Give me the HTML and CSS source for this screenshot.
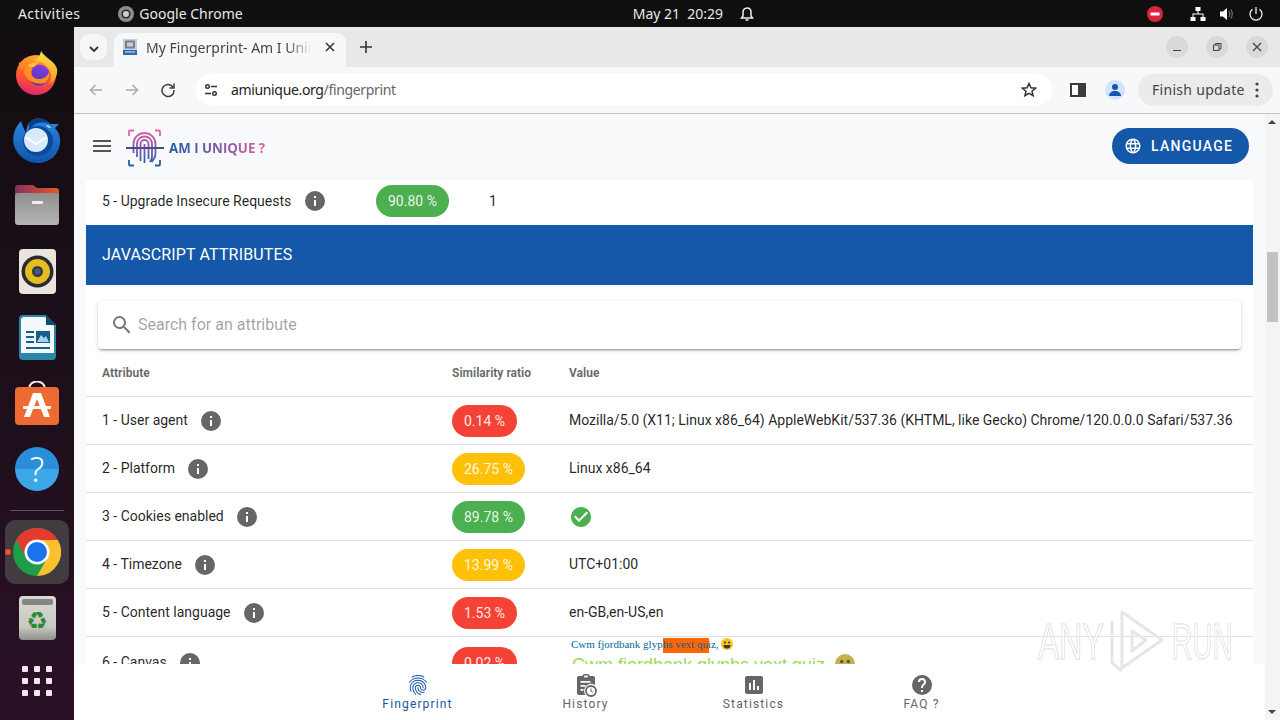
FILE: index.html
```html
<!DOCTYPE html>
<html lang="en">
<head>
  <meta charset="UTF-8">
  <title>My Fingerprint- Am I Unique?</title>
  <link rel="stylesheet" href="styles.css">
</head>
<body>
  <svg class="defs" width="0" height="0">
    <symbol id="i-info" viewBox="0 0 24 24"><path d="M13,9H11V7H13M13,17H11V11H13M12,2A10,10 0 0,0 2,12A10,10 0 0,0 12,22A10,10 0 0,0 22,12A10,10 0 0,0 12,2Z"/></symbol>
  </svg>

  <div class="topbar">
    <span class="activities">Activities</span>
    <span class="app-name">
      <svg width="16" height="16" viewBox="0 0 16 16"><circle cx="8" cy="8" r="8" fill="#8d8d8d"/><circle cx="8" cy="8" r="4.6" fill="#2c2c2c"/><circle cx="8" cy="8" r="3" fill="#cfcfcf"/></svg>
      Google Chrome
    </span>
    <span class="clock">May 21&nbsp; 20:29</span>
    <svg class="bell" width="16" height="16" viewBox="0 0 16 16" fill="none" stroke="#eee" stroke-width="1.5"><path d="M8 2c-2.6 0-4 2-4 4.2V10l-1.5 2h11L12 10V6.200C12 4 10.600 2 8 2z"/><path d="M6.500 14h3" /></svg>
    <span class="tray">
      <svg class="tray-stop" width="16" height="16" viewBox="0 0 16 16"><circle cx="8" cy="8" r="8" fill="#d9243d"/><rect x="3.500" y="6.500" width="9" height="3" fill="#fff"/></svg>
      <svg class="tray-net" width="16" height="16" viewBox="0 0 16 16" fill="#fff"><rect x="5.500" y="1" width="5" height="4"/><rect x="0.500" y="11" width="5" height="4"/><rect x="10.500" y="11" width="5" height="4"/><path d="M7.500 5h1v2.500h5V11h-1V8.500h-9V11h-1V7.500h5z"/></svg>
      <svg class="tray-vol" width="16" height="16" viewBox="0 0 16 16"><path d="M1 5.500h3L8 2v12l-4-3.500H1z" fill="#fff"/><path d="M10 5c1 1.800 1 4.200 0 6M12 3.500c1.600 2.700 1.600 6.300 0 9" fill="none" stroke="#888" stroke-width="1"/></svg>
      <svg class="tray-pow" width="16" height="16" viewBox="0 0 16 16" fill="none" stroke="#eee" stroke-width="1.300"><path d="M8 1v7"/><path d="M4.500 3.200a6 6 0 1 0 7 0"/></svg>
    </span>
  </div>

  <nav class="dock">
    <div class="dock-slot">
      <svg width="44" height="44" viewBox="0 0 44 44">
        <defs>
          <linearGradient id="ff" x1="0.6" y1="0" x2="0.4" y2="1"><stop offset="0" stop-color="#ffb12a"/><stop offset=".55" stop-color="#ff5a2c"/><stop offset="1" stop-color="#e0246e"/></linearGradient>
          <linearGradient id="ffy" x1="0" y1="0" x2="0" y2="1"><stop offset="0" stop-color="#ffe04a"/><stop offset="1" stop-color="#ff9a20"/></linearGradient>
          <linearGradient id="ffp" x1="0.7" y1="0" x2="0.3" y2="1"><stop offset="0" stop-color="#8a3fe0"/><stop offset="1" stop-color="#4b2fb8"/></linearGradient>
        </defs>
        <circle cx="21" cy="24" r="20" fill="url(#ff)"/>
        <path d="M4 11c0 3 1 5 3 7l5-4z" fill="#ff8a26"/>
        <path d="M26 0c-1 5-3 8-7 10 6 0 12 3 15 8 3 5 3 11 0 15 6-3 9-9 8-15-1-7-12-11-16-18z" fill="url(#ffy)"/>
        <circle cx="24" cy="24" r="10.500" fill="url(#ffp)"/>
        <path d="M9 21c1-7 8-11 15-10 2 0 4 1 6 2-5-1-9 0-12 3l-1 3c-2 4 1 9 7 9 5 0 9-3 10-7 1 3 0 8-4 11-7 2-18 0-21-11z" fill="#ff8d24"/>
        <path d="M13 14c3-2 7-3 11-3l-5 5h-5z" fill="#ffc238"/>
      </svg>
    </div>
    <div class="dock-slot">
      <svg width="50" height="48" viewBox="0 0 50 48">
        <defs><linearGradient id="tb" x1="0.5" y1="0" x2="0.5" y2="1"><stop offset="0" stop-color="#2a86e0"/><stop offset="1" stop-color="#0f55ad"/></linearGradient></defs>
        <path d="M9 6C2 13-1 24 3 33c4 9 13 15 23 15 12 0 21-9 22-20 .5-6-1-11-5-15l4-4-9 0C32 2 22 2 17 8c-2 3-3 7-3 10C12 14 10 10 9 6z" fill="url(#tb)"/>
        <path d="M17 8c5-6 15-6 21 1-5-2-11-2-15 0-3 2-5 5-6 8z" fill="#0b3d85"/>
        <circle cx="26" cy="26" r="15" fill="#0d4a9e"/>
        <circle cx="24" cy="25" r="12" fill="#d6eaf8"/>
        <path d="M13.500 22L24 29l10.500-7" fill="none" stroke="#fff" stroke-width="2"/>
        <path d="M34 10c2 0 4 1 5 3-2 0-4-1-5-3z" fill="#cfe6fa"/>
      </svg>
    </div>
    <div class="dock-slot">
      <svg width="44" height="40" viewBox="0 0 44 40"><defs><linearGradient id="fold" x1="0" y1="0" x2="1" y2="0"><stop offset="0" stop-color="#8a2f5a"/><stop offset="1" stop-color="#e0582c"/></linearGradient><linearGradient id="foldb" x1="0" y1="0" x2="0" y2="1"><stop offset="0" stop-color="#8f8f8f"/><stop offset="1" stop-color="#b5b5b5"/></linearGradient></defs><path d="M3 0h15l4 3h19a3 3 0 0 1 3 3v6H0V3a3 3 0 0 1 3-3z" fill="url(#fold)"/><rect y="8" width="44" height="32" rx="3" fill="url(#foldb)"/><rect x="17" y="16" width="11" height="3" rx="1" fill="#eee"/></svg>
    </div>
    <div class="dock-slot">
      <svg width="37" height="45" viewBox="0 0 37 45"><rect width="37" height="45" rx="4" fill="#e8e5dc"/><circle cx="18.500" cy="22.500" r="16" fill="#2a2a35"/><circle cx="18.500" cy="22.500" r="12.500" fill="#e6bd1e"/><circle cx="18.500" cy="22.500" r="5.500" fill="#333a48"/><circle cx="18.500" cy="22.500" r="3" fill="#4d5a6e"/></svg>
    </div>
    <div class="dock-slot">
      <svg width="37" height="45" viewBox="0 0 37 45"><path d="M4 0h23l10 10v31a4 4 0 0 1-4 4H4a4 4 0 0 1-4-4V4a4 4 0 0 1 4-4z" fill="#2a86a8"/><path d="M4 2h22l9 9v27H2V4z" fill="#f3f8fb"/><path d="M27 0l10 10H27z" fill="#0f4d75"/><rect x="7" y="16" width="8" height="2" fill="#1a5e8e"/><rect x="7" y="21" width="8" height="2" fill="#1a5e8e"/><rect x="7" y="26" width="8" height="2" fill="#1a5e8e"/><rect x="7" y="32" width="24" height="2" fill="#1a5e8e"/><rect x="17" y="16" width="14" height="12" fill="#1a5e8e"/><path d="M18 27l4-7 3 3 2-2 3 6z" fill="#a9d3ec"/></svg>
    </div>
    <div class="dock-slot">
      <svg width="44" height="44" viewBox="0 0 44 44"><path d="M14 8C14-2 30-2 30 8" fill="none" stroke="#f2e8e2" stroke-width="2"/><rect y="6" width="44" height="38" rx="4" fill="#ee6a33"/><path d="M18 12h8l9 24h-6l-7-18-7 18H9z" fill="#fff"/><rect x="8" y="25" width="28" height="3" rx="1" fill="#fff"/></svg>
    </div>
    <div class="dock-slot">
      <div class="help-ball">?</div>
    </div>
    <div class="dock-sep"></div>
    <div class="dock-slot dock-active">
      <span class="run-dot"></span>
      <svg width="48" height="48" viewBox="0 0 48 48"><circle cx="24" cy="24" r="24" fill="#1f9e4a"/><path d="M24 0A24 24 0 0 1 44.800 12H24A12 12 0 0 0 13.600 30L3.200 12A24 24 0 0 1 24 0z" fill="#e33b2e"/><path d="M24 12H44.800A24 24 0 0 1 24 48L34.400 30A12 12 0 0 0 24 12z" fill="#fbc02d"/><circle cx="24" cy="24" r="12.500" fill="#fff"/><circle cx="24" cy="24" r="10" fill="#1a73e8"/></svg>
    </div>
    <div class="dock-slot">
      <div class="trash"><span class="trash-lid"></span><span class="trash-sign">♻</span></div>
    </div>
    <div class="dock-slot dock-grid-slot">
      <div class="app-grid"><i></i><i></i><i></i><i></i><i></i><i></i><i></i><i></i><i></i></div>
    </div>
  </nav>

  <div class="browser">
    <div class="tabstrip">
      <button class="tab-search">
        <svg width="10" height="6" viewBox="0 0 10 6" fill="none" stroke="#333" stroke-width="1.800"><path d="M1 1l4 4 4-4"/></svg>
      </button>
      <div class="tab">
        <svg class="favicon" width="14" height="16" viewBox="0 0 14 16"><rect width="14" height="16" fill="#c9ced6"/><rect x="2" y="1.500" width="10" height="8" fill="#76818f"/><rect x="4" y="3.500" width="6" height="4" fill="#c9ced6"/><rect y="11" width="14" height="5" fill="#2a6db5"/><rect x="2" y="12.500" width="10" height="1" fill="#dfe9f5"/></svg>
        <span class="tab-title">My Fingerprint- Am I Unique?</span>
        <svg width="10" height="10" viewBox="0 0 10 10" stroke="#333" stroke-width="1.500"><path d="M1 1l8 8M9 1l-8 8"/></svg>
      </div>
      <svg class="new-tab" width="12" height="12" viewBox="0 0 12 12" stroke="#333" stroke-width="1.600"><path d="M6 0v12M0 6h12"/></svg>
      <div class="win-buttons">
        <span class="win-btn"><svg width="10" height="10" viewBox="0 0 10 10" stroke="#444" stroke-width="1"><path d="M1 8.500h8"/></svg></span>
        <span class="win-btn"><svg width="10" height="10" viewBox="0 0 10 10" fill="none" stroke="#444" stroke-width="1"><rect x="1.500" y="3" width="5.500" height="5.500"/><path d="M3.500 3V1.500H9V7H7"/></svg></span>
        <span class="win-btn"><svg width="10" height="10" viewBox="0 0 10 10" stroke="#444" stroke-width="1.300"><path d="M1 1l8 8M9 1l-8 8"/></svg></span>
      </div>
    </div>

    <div class="toolbar">
      <svg class="tool-icon" width="16" height="16" viewBox="0 0 16 16" fill="none" stroke="#a9abad" stroke-width="1.500"><path d="M14 8H2.500M7.500 3l-5 5 5 5"/></svg>
      <svg class="tool-icon" width="16" height="16" viewBox="0 0 16 16" fill="none" stroke="#a9abad" stroke-width="1.500"><path d="M2 8h11.500M8.500 3l5 5-5 5"/></svg>
      <svg class="tool-icon" width="16" height="16" viewBox="0 0 16 16" fill="none" stroke="#3c3c3c" stroke-width="1.500"><path d="M13.200 5.500A6 6 0 1 0 14 8"/><path d="M14 1.500v4.500H9.500" /></svg>
      <div class="omnibox">
        <svg width="14" height="14" viewBox="0 0 14 14" fill="none" stroke="#333" stroke-width="1.400"><circle cx="3.500" cy="3.500" r="1.800"/><path d="M7 3.500h6M1 10.500h6"/><circle cx="10.500" cy="10.500" r="1.800"/></svg>
        <span class="url">amiunique.org<span class="url-path">/fingerprint</span></span>
        <svg class="star" width="16" height="16" viewBox="0 0 16 16" fill="none" stroke="#333" stroke-width="1.500"><path d="M8 1.500l1.900 4.300 4.600.4-3.500 3 1.100 4.500L8 11.300l-4.100 2.400L5 9.200l-3.500-3 4.600-.4z"/></svg>
      </div>
      <svg class="side-panel" width="16" height="14" viewBox="0 0 16 14"><rect x="1" y="1" width="14" height="12" fill="#fff" stroke="#3c3c3c" stroke-width="2"/><rect x="8" y="1" width="7" height="12" fill="#3c3c3c"/></svg>
      <span class="profile">
        <svg width="14" height="14" viewBox="0 0 14 14" fill="#1558b0"><circle cx="7" cy="4" r="3"/><path d="M1 13c0-3 2.500-5 6-5s6 2 6 5z"/></svg>
      </span>
      <div class="update-pill">
        Finish update
        <svg width="4" height="16" viewBox="0 0 4 16" fill="#444"><circle cx="2" cy="2" r="1.600"/><circle cx="2" cy="8" r="1.600"/><circle cx="2" cy="14" r="1.600"/></svg>
      </div>
    </div>

    <div class="viewport">
      <div class="page">
        <header class="app-bar">
          <svg class="burger" width="24" height="24" viewBox="0 0 24 24" fill="#555"><path d="M3,6H21V8H3V6M3,11H21V13H3V11M3,16H21V18H3V16Z"/></svg>
          <svg class="logo-mark" width="38" height="38" viewBox="0 0 38 38" fill="none" stroke-width="1.800">
            <defs><linearGradient id="lg" x1="0" y1="0" x2="0" y2="1"><stop offset="0" stop-color="#d9609f"/><stop offset=".55" stop-color="#7a5aa8"/><stop offset="1" stop-color="#2c62a8"/></linearGradient></defs>
            <path d="M3 7V2.500a1 1 0 0 1 1-1h4M29 1.500h4a1 1 0 0 1 1 1V7" stroke="#e0689f"/>
            <path d="M3 31v4.500a1 1 0 0 0 1 1h4M29 36.500h4a1 1 0 0 0 1-1V31" stroke="#1f5fa8"/>
            <path d="M7.500 24V15a11 11 0 0 1 22 0v9c0 4-2 7-4 9M11 28V15a7.500 7.500 0 0 1 15 0v13c0 2-1 3-2 5M14.500 32V15a4 4 0 0 1 8 0v15M18.500 15v19" stroke="url(#lg)"/>
            <path d="M0 19h38" stroke="#4a4a8f" stroke-width="2"/>
          </svg>
          <span class="logo-text">AM I UNIQUE ?</span>
          <button class="lang-btn">
            <svg width="18" height="18" viewBox="0 0 24 24" fill="#fff"><path d="M16.360,14C16.440,13.340 16.500,12.680 16.500,12C16.500,11.320 16.440,10.660 16.360,10H19.740C19.900,10.640 20,11.310 20,12C20,12.690 19.900,13.360 19.740,14M14.590,19.560C15.190,18.450 15.650,17.250 15.970,16H18.920C17.960,17.650 16.430,18.930 14.590,19.560M14.340,14H9.660C9.560,13.340 9.500,12.680 9.500,12C9.500,11.320 9.560,10.650 9.660,10H14.340C14.430,10.650 14.500,11.320 14.500,12C14.500,12.680 14.430,13.340 14.340,14M12,19.960C11.170,18.760 10.500,17.430 10.090,16H13.910C13.500,17.430 12.830,18.760 12,19.960M8,8H5.080C6.030,6.340 7.570,5.060 9.400,4.440C8.800,5.550 8.350,6.750 8,8M5.080,16H8C8.350,17.250 8.800,18.450 9.400,19.560C7.570,18.930 6.030,17.650 5.080,16M4.260,14C4.100,13.360 4,12.690 4,12C4,11.310 4.100,10.640 4.260,10H7.640C7.560,10.660 7.500,11.320 7.500,12C7.500,12.680 7.560,13.340 7.640,14M12,4.030C12.830,5.230 13.500,6.570 13.910,8H10.090C10.500,6.570 11.170,5.230 12,4.030M18.920,8H15.970C15.650,6.750 15.190,5.550 14.590,4.440C16.430,5.070 17.960,6.340 18.920,8M12,2C6.470,2 2,6.500 2,12A10,10 0 0,0 12,22A10,10 0 0,0 22,12A10,10 0 0,0 12,2Z"/></svg>
            LANGUAGE
          </button>
        </header>

        <main class="content">
          <div class="card">
            <div class="row row-http">
              <div class="cell-name">5 - Upgrade Insecure Requests <svg class="info"><use href="#i-info"/></svg></div>
              <div><span class="pill green">90.80 %</span></div>
              <div>1</div>
            </div>

            <div class="banner">JAVASCRIPT ATTRIBUTES</div>

            <div class="search-wrap">
              <div class="search">
                <svg width="24" height="24" viewBox="0 0 24 24" fill="#757575"><path d="M9.500,3A6.500,6.500 0 0,1 16,9.500C16,11.110 15.410,12.590 14.440,13.730L14.710,14H15.500L20.500,19L19,20.500L14,15.500V14.710L13.730,14.440C12.590,15.410 11.110,16 9.500,16A6.500,6.500 0 0,1 3,9.500A6.500,6.500 0 0,1 9.500,3M9.500,5C7,5 5,7 5,9.500C5,12 7,14 9.500,14C12,14 14,12 14,9.500C14,7 12,5 9.500,5Z"/></svg>
                <span class="placeholder">Search for an attribute</span>
              </div>
            </div>

            <div class="row row-js row-head">
              <div>Attribute</div>
              <div>Similarity ratio</div>
              <div>Value</div>
            </div>
            <div class="row row-js">
              <div class="cell-name">1 - User agent <svg class="info"><use href="#i-info"/></svg></div>
              <div><span class="pill red">0.14 %</span></div>
              <div class="nowrap">Mozilla/5.0 (X11; Linux x86_64) AppleWebKit/537.36 (KHTML, like Gecko) Chrome/120.0.0.0 Safari/537.36</div>
            </div>
            <div class="row row-js">
              <div class="cell-name">2 - Platform <svg class="info"><use href="#i-info"/></svg></div>
              <div><span class="pill amber">26.75 %</span></div>
              <div>Linux x86_64</div>
            </div>
            <div class="row row-js">
              <div class="cell-name">3 - Cookies enabled <svg class="info"><use href="#i-info"/></svg></div>
              <div><span class="pill green">89.78 %</span></div>
              <div class="check-cell"><svg width="24" height="24" viewBox="0 0 24 24" fill="#4caf50"><path d="M12 2C6.500 2 2 6.500 2 12S6.500 22 12 22 22 17.500 22 12 17.500 2 12 2M10 17L5 12L6.410 10.590L10 14.170L17.590 6.580L19 8L10 17Z"/></svg></div>
            </div>
            <div class="row row-js">
              <div class="cell-name">4 - Timezone <svg class="info"><use href="#i-info"/></svg></div>
              <div><span class="pill amber">13.99 %</span></div>
              <div>UTC+01:00</div>
            </div>
            <div class="row row-js">
              <div class="cell-name">5 - Content language <svg class="info"><use href="#i-info"/></svg></div>
              <div><span class="pill red">1.53 %</span></div>
              <div>en-GB,en-US,en</div>
            </div>
            <div class="row row-js row-canvas">
              <div class="cell-name">6 - Canvas <svg class="info"><use href="#i-info"/></svg></div>
              <div><span class="pill red">0.02 %</span></div>
              <div class="canvas-print">
                <span class="print-box"></span>
                <span class="print-small">Cwm fjordbank glyphs vext quiz, <svg class="smile" width="12" height="12" viewBox="0 0 12 12"><circle cx="6" cy="6" r="6" fill="#f5c518"/><circle cx="4" cy="4.500" r="1" fill="#333"/><circle cx="8" cy="4.500" r="1" fill="#333"/><path d="M2.500 7h7a3.500 3.500 0 0 1-7 0z" fill="#333"/></svg></span>
                <span class="print-large">Cwm fjordbank glyphs vext quiz, <svg class="smile-large" width="20" height="20" viewBox="0 0 12 12"><circle cx="6" cy="6" r="6" fill="#c9b04a"/><circle cx="4" cy="4.500" r="1" fill="#555"/><circle cx="8" cy="4.500" r="1" fill="#555"/></svg></span>
              </div>
            </div>
          </div>
        </main>

        <footer class="bottom-nav">
          <div class="nav-item active">
            <svg width="24" height="24" viewBox="0 0 24 24"><path d="M17.810,4.470C17.730,4.470 17.650,4.450 17.580,4.410C15.660,3.420 14,3 12,3C10.030,3 8.150,3.470 6.440,4.410C6.200,4.540 5.900,4.450 5.760,4.210C5.630,3.970 5.720,3.660 5.960,3.530C7.820,2.500 9.860,2 12,2C14.140,2 16,2.470 18.040,3.500C18.290,3.650 18.380,3.950 18.250,4.190C18.160,4.370 18,4.470 17.810,4.470M3.500,9.720C3.400,9.720 3.300,9.690 3.210,9.630C3,9.470 2.930,9.160 3.090,8.930C4.080,7.530 5.340,6.430 6.840,5.660C10,4.040 14,4.030 17.150,5.650C18.650,6.420 19.910,7.500 20.900,8.900C21.060,9.120 21,9.440 20.780,9.600C20.550,9.760 20.240,9.710 20.080,9.500C19.180,8.220 18.040,7.230 16.690,6.540C13.820,5.070 10.150,5.070 7.290,6.550C5.930,7.250 4.790,8.250 3.890,9.500C3.810,9.650 3.660,9.720 3.500,9.720M9.750,21.790C9.620,21.790 9.500,21.740 9.400,21.640C8.530,20.770 8.060,20.210 7.390,19C6.700,17.770 6.340,16.270 6.340,14.660C6.340,11.690 8.880,9.270 12,9.270C15.120,9.270 17.660,11.690 17.660,14.660A0.500,0.500 0 0,1 17.160,15.160A0.500,0.500 0 0,1 16.660,14.660C16.660,12.240 14.570,10.270 12,10.270C9.430,10.270 7.340,12.240 7.340,14.660C7.340,16.100 7.660,17.430 8.270,18.500C8.910,19.660 9.350,20.150 10.120,20.930C10.310,21.130 10.310,21.440 10.120,21.640C10,21.740 9.880,21.790 9.750,21.790M16.920,19.940C15.730,19.940 14.680,19.640 13.820,19.050C12.330,18.040 11.440,16.400 11.440,14.660A0.500,0.500 0 0,1 11.940,14.160A0.500,0.500 0 0,1 12.440,14.660C12.440,16.070 13.160,17.400 14.380,18.220C15.090,18.700 15.920,18.930 16.920,18.930C17.160,18.930 17.560,18.900 17.960,18.830C18.230,18.780 18.500,18.960 18.540,19.240C18.590,19.500 18.410,19.770 18.130,19.820C17.560,19.930 17.060,19.940 16.920,19.940M14.910,22C14.870,22 14.820,22 14.780,22C13.190,21.540 12.150,20.950 11.060,19.880C9.660,18.500 8.890,16.640 8.890,14.660C8.890,13.040 10.270,11.720 11.970,11.720C13.670,11.720 15.050,13.040 15.050,14.660C15.050,15.730 16,16.600 17.130,16.600C18.280,16.600 19.210,15.730 19.210,14.660C19.210,10.890 15.960,7.830 11.960,7.830C9.120,7.830 6.500,9.410 5.350,11.860C4.960,12.670 4.760,13.620 4.760,14.660C4.760,15.440 4.830,16.670 5.430,18.270C5.530,18.530 5.400,18.820 5.140,18.910C4.880,19 4.590,18.870 4.500,18.620C4,17.310 3.770,16 3.770,14.660C3.770,13.460 4,12.370 4.450,11.420C5.780,8.630 8.730,6.820 11.960,6.820C16.500,6.820 20.210,10.330 20.210,14.650C20.210,16.270 18.830,17.590 17.130,17.590C15.430,17.590 14.050,16.270 14.050,14.650C14.050,13.580 13.120,12.710 11.970,12.710C10.820,12.710 9.890,13.580 9.890,14.650C9.890,16.360 10.550,17.960 11.760,19.160C12.710,20.100 13.620,20.620 15.030,21C15.300,21.080 15.450,21.360 15.380,21.620C15.330,21.850 15.120,22 14.910,22Z"/></svg>
            Fingerprint
          </div>
          <div class="nav-item">
            <svg width="24" height="24" viewBox="0 0 24 24"><path d="M19 3h-3.200C15.400 1.800 14.300 1 13 1h-2C9.700 1 8.600 1.800 8.200 3H5C3.900 3 3 3.900 3 5v15c0 1.100.9 2 2 2h6.500A7 7 0 0 1 21 12V5c0-1.100-.9-2-2-2z"/><rect x="10" y="2.500" width="4" height="2" rx="1" fill="#fff"/><path d="M6.500 8h10v1.800h-10zM6.500 12h5v1.800h-5zM6.500 16h3v1.800h-3z" fill="#fff"/><circle cx="17" cy="18" r="5" fill="#fff" stroke="currentColor" stroke-width="1.800"/><path d="M16.500 15.500v3l2.300 1.300.5-.9-1.800-1V15.500z"/></svg>
            History
          </div>
          <div class="nav-item">
            <svg width="24" height="24" viewBox="0 0 24 24"><path d="M19 3H5C3.900 3 3 3.900 3 5V19C3 20.100 3.900 21 5 21H19C20.100 21 21 20.100 21 19V5C21 3.900 20.100 3 19 3M9 17H7V10H9V17M13 17H11V7H13V17M17 17H15V13H17V17Z"/></svg>
            Statistics
          </div>
          <div class="nav-item">
            <svg width="24" height="24" viewBox="0 0 24 24"><path d="M15.070,11.250L14.170,12.170C13.450,12.890 13,13.500 13,15H11V14.500C11,13.390 11.450,12.390 12.170,11.670L13.410,10.410C13.780,10.050 14,9.550 14,9C14,7.890 13.100,7 12,7A2,2 0 0,0 10,9H8A4,4 0 0,1 12,5A4,4 0 0,1 16,9C16,9.880 15.640,10.670 15.070,11.250M13,19H11V17H13M12,2A10,10 0 0,0 2,12A10,10 0 0,0 12,22A10,10 0 0,0 22,12C22,6.470 17.500,2 12,2Z"/></svg>
            FAQ ?
          </div>
        </footer>
      </div>

      <div class="scrollbar">
        <span class="arrow-up"></span>
        <span class="thumb"></span>
        <span class="arrow-down"></span>
      </div>

      <div class="watermark">
        <span class="wm-word wm-any">ANY</span>
        <svg width="58" height="66" viewBox="0 0 58 66" fill="none" stroke="#e6e6e6" stroke-width="3" stroke-linejoin="round"><path d="M14 3v56l40-28z"/><path d="M4 12v42l10 8M24 22v20l14-11z"/></svg>
        <span class="wm-word wm-run">RUN</span>
      </div>
    </div>
  </div>
</body>
</html>
```

FILE: styles.css
```css
:root {
  --blue: #1557a8;
  --text: rgba(0, 0, 0, 0.87);
  --line: #e0e0e0;
  --ui-font: "Noto Sans", "Open Sans", sans-serif;
}
* {
  box-sizing: border-box;
}
html, body {
  height: 100%;
}
body {
  margin: 0;
  display: grid;
  grid-template-columns: 74px 1fr;
  grid-template-rows: 27px 693px;
  overflow: hidden;
  font-family: Roboto, sans-serif;
  font-size: 14px;
  line-height: 1.5;
  color: var(--text);
  background: #111;
}
.defs {
  position: absolute;
}

/* ubuntu top bar */
.topbar {
  grid-column: 1 / 3;
  display: flex;
  align-items: center;
  background: #0f0f0f;
  color: #e8e8e8;
  font-family: var(--ui-font);
  font-size: 14px;
  line-height: normal;
}
.activities {
  margin-left: 18px;
  letter-spacing: 0.4px;
}
.app-name {
  display: flex;
  align-items: center;
  gap: 5px;
  margin-left: 38px;
}
.clock {
  margin-left: 390px;
}
.bell {
  margin-left: 16px;
}
.tray {
  margin-left: auto;
  display: flex;
  align-items: center;
  padding-right: 16px;
}
.tray-net {
  margin-left: 27px;
}
.tray-vol {
  margin-left: 13px;
}
.tray-pow {
  margin-left: 13px;
}

/* dock */
.dock {
  display: flex;
  flex-direction: column;
  padding-top: 13px;
  background: linear-gradient(180deg, #120d10 0%, #1c0f1a 50%, #2b1026 100%);
}
.dock-slot {
  position: relative;
  height: 66px;
  flex: none;
  display: flex;
  align-items: center;
  justify-content: center;
}
.dock-sep {
  height: 17px;
  flex: none;
  margin: 0 10px;
  background: linear-gradient(#555, #555) center / 100% 1px no-repeat;
}
.dock-active {
  margin: 1px 5px;
  border-radius: 10px;
  background: #423b40;
  height: 64px;
}
.run-dot {
  position: absolute;
  left: 0;
  top: 29px;
  width: 6px;
  height: 6px;
  border-radius: 50%;
  background: #e95420;
}
.help-ball {
  width: 44px;
  height: 44px;
  border-radius: 50%;
  background: linear-gradient(#2a8fd8 50%, #3ba6e8 50%);
  color: #fff;
  font-family: var(--ui-font);
  font-weight: 300;
  font-size: 34px;
  line-height: 44px;
  text-align: center;
}
.trash {
  width: 37px;
  height: 44px;
  padding-top: 3px;
  border-radius: 4px;
  background: linear-gradient(#d9d9d5 0%, #c8c8c4 70%, #8e8e8a 100%);
  text-align: center;
}
.trash-lid {
  display: block;
  height: 6px;
  margin: 0 3px;
  border-radius: 2px;
  background: #858582;
}
.trash-sign {
  display: block;
  font-family: "DejaVu Sans", sans-serif;
  font-size: 24px;
  line-height: 32px;
  color: #2f8a2f;
}
.dock-grid-slot {
  height: 60px;
}
.app-grid {
  display: grid;
  grid-template-columns: repeat(3, 6px);
  gap: 6px;
}
.app-grid i {
  height: 6px;
  background: #f4e6f0;
  border-radius: 1px;
}

/* chrome */
.browser {
  display: flex;
  flex-direction: column;
  min-width: 0;
  background: #fff;
}
.tabstrip {
  height: 40px;
  flex: none;
  display: flex;
  align-items: flex-end;
  background: #e8e8e8;
  font-family: var(--ui-font);
  line-height: normal;
}
.tab-search {
  width: 27px;
  height: 26px;
  margin: 0 7px 7px 6px;
  padding: 0;
  border: none;
  border-radius: 9px;
  background: #f6f6f8;
}
.tab {
  width: 232px;
  height: 34px;
  display: flex;
  align-items: center;
  padding: 0 11px 6px 9px;
  border-radius: 9px 9px 0 0;
  background: #f7f8fa;
}
.favicon {
  flex: none;
}
.tab-title {
  width: 166px;
  margin: 0 13px 0 9px;
  flex: none;
  overflow: hidden;
  white-space: nowrap;
  font-size: 14px;
  color: #444;
  -webkit-mask-image: linear-gradient(90deg, #000 85%, transparent 100%);
  mask-image: linear-gradient(90deg, #000 85%, transparent 100%);
}
.new-tab {
  margin: 0 0 14px 14px;
}
.win-buttons {
  margin-left: auto;
  margin-right: 12px;
  align-self: center;
  display: flex;
  gap: 18px;
}
.win-btn {
  width: 22px;
  height: 22px;
  border-radius: 50%;
  background: #d9d9d9;
  display: flex;
  align-items: center;
  justify-content: center;
}
.toolbar {
  height: 47px;
  flex: none;
  display: flex;
  align-items: center;
  padding: 0 7px 1px 14px;
  border-bottom: 1px solid #c4c4c6;
  background: #f7f8fa;
  font-family: var(--ui-font);
  line-height: normal;
}
.tool-icon {
  margin-right: 20px;
}
.omnibox {
  width: 856px;
  height: 32px;
  margin-left: 0;
  padding: 0 15px 0 8px;
  display: flex;
  align-items: center;
  border-radius: 16px;
  background: #fff;
}
.url {
  margin-left: 13px;
  font-size: 14px;
  letter-spacing: -0.35px;
  color: #222;
}
.url-path {
  color: #666;
}
.star {
  margin-left: auto;
}
.side-panel {
  margin-left: 18px;
}
.profile {
  width: 20px;
  height: 20px;
  margin-left: 19px;
  border-radius: 50%;
  background: #d3e3fd;
  display: flex;
  align-items: center;
  justify-content: center;
}
.update-pill {
  width: 135px;
  height: 32px;
  margin-left: 13px;
  padding: 0 14px 0 14px;
  display: flex;
  align-items: center;
  justify-content: space-between;
  border-radius: 16px;
  background: #ebebeb;
  font-size: 14px;
  letter-spacing: 0.3px;
  color: #444;
}

/* page */
.viewport {
  position: relative;
  flex: 1;
  min-height: 0;
  display: flex;
}
.page {
  flex: 1;
  min-width: 0;
  display: flex;
  flex-direction: column;
  background: #f8f9fb;
}
.app-bar {
  height: 66px;
  flex: none;
  display: flex;
  align-items: center;
  padding: 0 16px 0 16px;
  background: #f8f9fb;
}
.burger {
  margin-top: -3px;
}
.logo-mark {
  margin-left: 12px;
  margin-top: 2px;
}
.logo-text {
  margin-left: 5px;
  margin-top: 4px;
  font-family: "Open Sans", sans-serif;
  font-weight: 700;
  font-size: 13.3px;
  background: linear-gradient(90deg, #1f5fa8 0%, #7a5aa8 50%, #d9609f 100%);
  -webkit-background-clip: text;
  background-clip: text;
  color: transparent;
}
.lang-btn {
  width: 137px;
  height: 36px;
  margin-left: auto;
  margin-top: -2px;
  display: flex;
  align-items: center;
  gap: 9px;
  padding: 0 0 0 12px;
  border: none;
  border-radius: 18px;
  background: var(--blue);
  color: #fff;
  font-family: Roboto, sans-serif;
  font-weight: 500;
  font-size: 14px;
  letter-spacing: 1.25px;
}
.content {
  flex: 1;
  min-height: 0;
  overflow: hidden;
  padding: 0 12px;
}
.card {
  background: #fff;
}
.row {
  display: grid;
  align-items: center;
  height: 48px;
  border-bottom: 1px solid var(--line);
}
.row > div {
  padding-left: 16px;
}
.row-http {
  grid-template-columns: 274px 113px 1fr;
  height: 45px;
  padding-bottom: 3px;
  border-bottom: none;
}
.row-http .info {
  margin-left: 12px;
}
.row-js {
  grid-template-columns: 350px 117px 1fr;
}
.row-canvas {
  height: 52px;
}
.row-head {
  font-size: 12px;
  font-weight: 700;
  color: rgba(0, 0, 0, 0.6);
}
.cell-name {
  display: flex;
  align-items: center;
}
.info {
  width: 24px;
  height: 24px;
  margin-left: 11px;
  fill: #666;
}
.pill {
  display: inline-block;
  height: 32px;
  padding: 0 12px;
  border-radius: 16px;
  line-height: 32px;
  color: rgba(255, 255, 255, 0.9);
  white-space: nowrap;
  vertical-align: top;
}
.green {
  background: #4caf50;
}
.red {
  background: #f44336;
}
.amber {
  background: #ffc107;
}
.nowrap {
  white-space: nowrap;
}
.check-cell {
  display: flex;
  align-items: center;
}
.banner {
  height: 60px;
  padding-left: 16px;
  display: flex;
  align-items: center;
  background: var(--blue);
  color: #fff;
  font-size: 16px;
  letter-spacing: 0.15px;
}
.search-wrap {
  padding: 16px 12px 0;
}
.search {
  height: 48px;
  display: flex;
  align-items: center;
  gap: 4px;
  padding-left: 12px;
  border-radius: 4px;
  background: #fff;
  box-shadow: 0 3px 1px -2px rgba(0, 0, 0, 0.2), 0 2px 2px rgba(0, 0, 0, 0.14), 0 1px 5px rgba(0, 0, 0, 0.12);
}
.placeholder {
  font-size: 16px;
  color: rgba(0, 0, 0, 0.38);
}

/* canvas fingerprint */
.canvas-print {
  position: relative;
  align-self: stretch;
}
.print-box {
  position: absolute;
  left: 110px;
  top: 1px;
  width: 46px;
  height: 15px;
  background: #ff6600;
}
.print-small {
  position: absolute;
  left: 18px;
  top: 0;
  white-space: nowrap;
  font-family: "Liberation Serif", serif;
  font-size: 11px;
  line-height: 15px;
  color: #069;
}
.smile {
  vertical-align: -2px;
}
.print-large {
  position: absolute;
  left: 19px;
  top: 16px;
  white-space: nowrap;
  font-family: "Liberation Sans", sans-serif;
  font-size: 18px;
  line-height: 24px;
  color: rgba(102, 204, 0, 0.7);
}
.smile-large {
  vertical-align: -3px;
}

.bottom-nav {
  height: 56px;
  flex: none;
  display: flex;
  justify-content: center;
  background: #fff;
}
.nav-item {
  width: 168px;
  display: flex;
  flex-direction: column;
  align-items: center;
  padding-top: 9px;
  font-size: 12px;
  letter-spacing: 1.15px;
  line-height: 14px;
  color: #666;
  fill: #666;
}
.nav-item.active {
  color: var(--blue);
  fill: var(--blue);
}

/* scrollbar */
.scrollbar {
  position: relative;
  width: 15px;
  flex: none;
  background: #f4f4f4;
}
.thumb {
  position: absolute;
  left: 2px;
  right: 2px;
  top: 138px;
  height: 70px;
  background: #c2c2c2;
}
.arrow-up, .arrow-down {
  position: absolute;
  left: 3px;
  width: 0;
  height: 0;
  border-left: 4px solid transparent;
  border-right: 4px solid transparent;
}
.arrow-up {
  top: 6px;
  border-bottom: 4px solid #444;
}
.arrow-down {
  bottom: 6px;
  border-top: 4px solid #444;
}

.watermark {
  position: absolute;
  left: 964px;
  top: 495px;
  display: flex;
  align-items: center;
  gap: 8px;
  pointer-events: none;
  font-family: "Liberation Sans", sans-serif;
  font-size: 50px;
  line-height: 66px;
  color: rgba(255, 255, 255, 0.4);
  -webkit-text-stroke: 1.5px #e6e6e6;
}
.wm-word {
  display: inline-block;
  width: 62px;
  white-space: nowrap;
  transform-origin: left center;
}
.wm-any {
  transform: scaleX(0.64);
}
.wm-run {
  margin-left: -2px;
  transform: scaleX(0.56);
}
```
